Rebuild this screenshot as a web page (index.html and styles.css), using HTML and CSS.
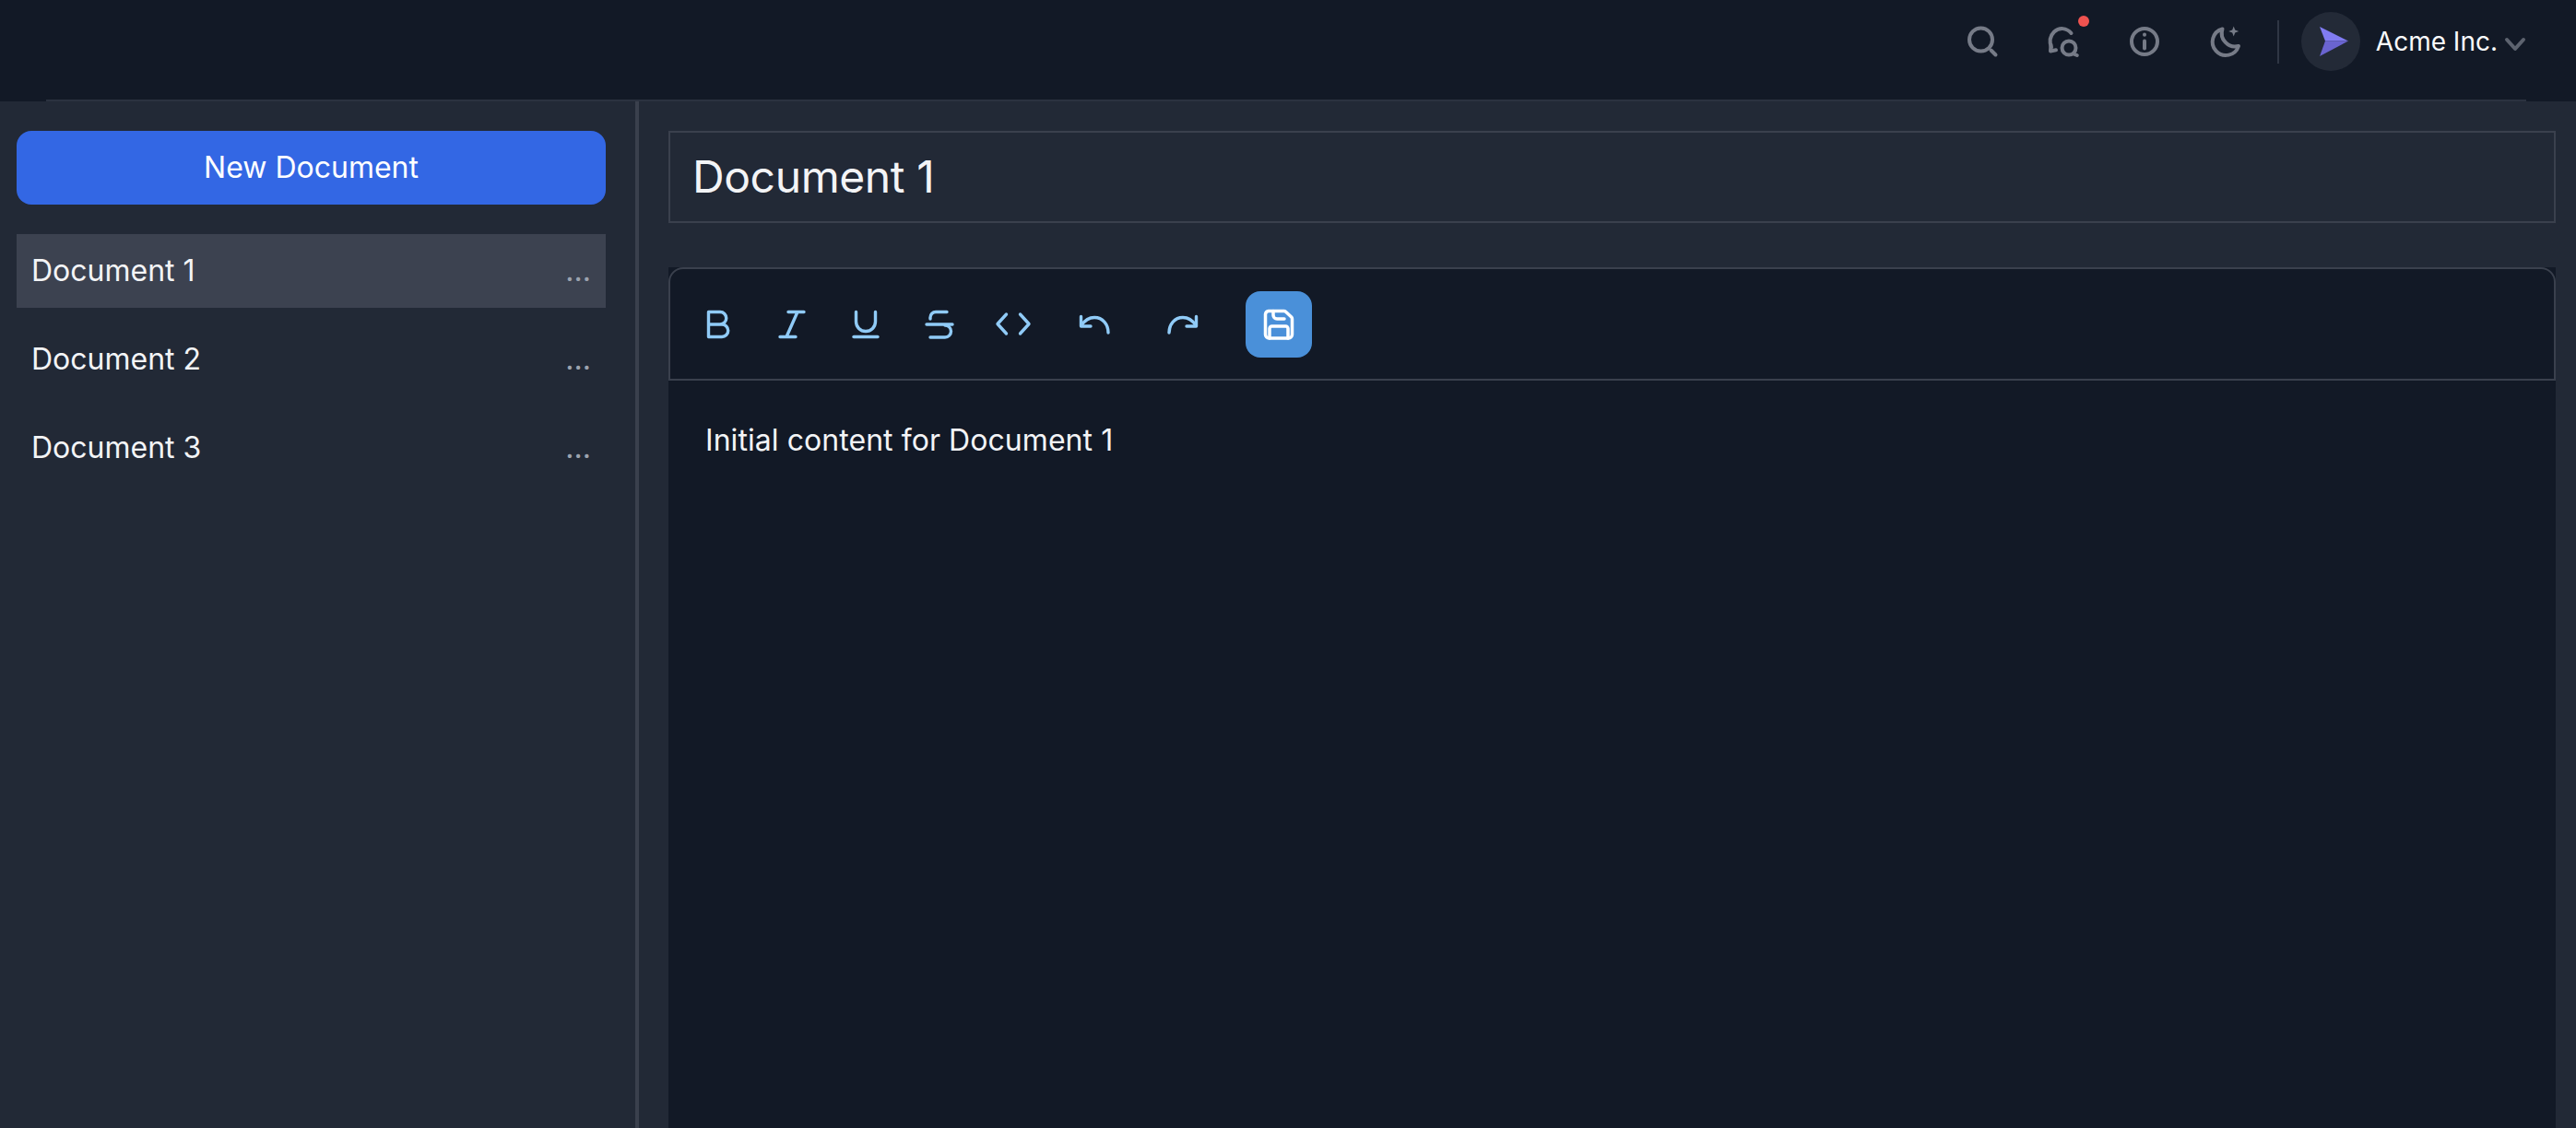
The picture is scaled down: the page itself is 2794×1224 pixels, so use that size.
FILE: index.html
```html
<!DOCTYPE html>
<html lang="en">
<head>
<meta charset="utf-8">
<title>Documents</title>
<link rel="stylesheet" href="styles.css">
</head>
<body>
<div class="app">
  <header class="header">
    <div class="header-inner">
      <div class="header-tools">
        <button class="hicon">
          <svg viewBox="0 0 40 40" class="hsvg"><circle cx="18.5" cy="18" r="12.5"/><path d="M29.5 29.5 34.5 34.5"/></svg>
        </button>
        <button class="hicon">
          <svg viewBox="0 0 40 40" class="hsvg"><path d="M7 26.5C4.5 20 5.5 14 10 9.5c5.5-5 13.500-4.500 18.500 1.500"/><path d="M6.500 23.500 6 30.500l6-1.200"/><circle cx="26" cy="27" r="7.500"/><path d="M31 33.500 34.800 35"/></svg>
          <span class="badge"></span>
        </button>
        <button class="hicon">
          <svg viewBox="0 0 40 40" class="hsvg"><circle cx="20" cy="20" r="14"/><path d="M20 19.500V27.500"/><path d="M20 12.500V12.700"/></svg>
        </button>
        <button class="hicon">
          <svg viewBox="0 0 40 40" class="hsvg"><path d="M16.500 6.500A14.500 14.500 0 1 0 34 25 14.500 14.500 0 0 1 16.500 6.500Z"/><path class="spark" d="M28.700 3.500 30.200 7.500 34.200 9 30.200 10.500 28.700 14.500 27.200 10.500 23.200 9 27.200 7.500Z"/></svg>
        </button>
      </div>
      <span class="hdivider"></span>
      <div class="account">
        <span class="avatar">
          <svg viewBox="0 0 64 64" class="plane"><path class="plane-top" d="M20 16 51 31.500H26Z"/><path class="plane-bottom" d="M20 48 51 31.500H26Z"/></svg>
        </span>
        <span class="account-name">Acme Inc.</span>
        <svg viewBox="0 0 24 16" class="chevron"><path d="M3 3 12 13 21 3"/></svg>
      </div>
    </div>
  </header>
  <div class="body">
    <aside class="sidebar">
      <button class="new-doc">New Document</button>
      <ul class="doc-list">
        <li class="doc-item active"><span>Document 1</span><span class="more">...</span></li>
        <li class="doc-item"><span>Document 2</span><span class="more">...</span></li>
        <li class="doc-item"><span>Document 3</span><span class="more">...</span></li>
      </ul>
    </aside>
    <main class="main">
      <div class="title-box">Document 1</div>
      <section class="editor">
        <div class="toolbar">
          <button class="tool"><svg viewBox="0 0 40 40" class="tsvg"><path d="M9.500 20V6.500H22a6.750 6.750 0 0 1 0 13.500H9.500V33.500H24a6.750 6.750 0 0 0 0-13.500H22"/></svg></button>
          <button class="tool"><svg viewBox="0 0 40 40" class="tsvg"><path d="M16 6.500H33M7 33.500H24M26 6.500 14 33.500"/></svg></button>
          <button class="tool"><svg viewBox="0 0 40 40" class="tsvg"><path d="M9.500 6.500V17a10.500 10.500 0 0 0 21 0V6.500"/><path d="M7 33.500H33"/></svg></button>
          <button class="tool"><svg viewBox="0 0 40 40" class="tsvg"><path d="M28 6.500H16a6 6 0 0 0-6 6V14"/><path d="M6 20H34"/><path d="M26 21a6.500 6.500 0 0 1 0 13H10"/></svg></button>
          <button class="tool"><svg viewBox="0 0 40 40" class="tsvg"><path d="M12.500 9 3 19.500 12.500 30M27.500 9 37 19.500 27.500 30"/></svg></button>
          <button class="tool wide"><svg viewBox="0 0 40 40" class="tsvg"><path d="M5.500 11.500V22H16"/><path d="M6 21C10 15 14 12.500 20 12.500 29 12.500 35 20 35 29"/></svg></button>
          <button class="tool wide"><svg viewBox="0 0 40 40" class="tsvg"><path d="M34.500 11.500V22H24"/><path d="M34 21C30 15 26 12.500 20 12.500 11 12.500 5 20 5 29"/></svg></button>
          <button class="save"><svg viewBox="0 0 40 40" class="ssvg"><path d="M9 5.500H25.500a3 3 0 0 1 2 .8L33.700 12a3 3 0 0 1 .8 2V31a4 4 0 0 1-4 4H9.500a4 4 0 0 1-4-4V9a4 4 0 0 1 3.500-3.500Z"/><path d="M14 5.500V10a4 4 0 0 0 4 4H26"/><path d="M10 35V24.500a2.500 2.500 0 0 1 2.500-2.500H27.500a2.500 2.500 0 0 1 2.500 2.500V35"/></svg></button>
        </div>
        <div class="content">Initial content for Document 1</div>
      </section>
    </main>
  </div>
</div>
</body>
</html>
```
FILE: styles.css
```css
* { box-sizing: border-box; }
html, body { margin: 0; height: 100%; overflow: hidden; }
body { background: #121926; color: #f3f4f6; font-family: Inter, "Liberation Sans", sans-serif; }
button { font: inherit; border: 0; background: none; color: inherit; padding: 0; margin: 0; }
ul { list-style: none; margin: 0; padding: 0; }

.app { display: flex; flex-direction: column; height: 1224px; }

.header { height: 110px; flex: none; background: #121926; padding: 0 54px 0 50px; }
.header-inner { height: 110px; display: flex; align-items: center; justify-content: flex-end; border-bottom: 2px solid #2b3240; padding-bottom: 18px; }
.header-tools { display: flex; gap: 48px; }
.hicon { position: relative; width: 40px; height: 40px; display: block; }
.hsvg { display: block; width: 40px; height: 40px; fill: none; stroke: #767b87; stroke-width: 4; stroke-linecap: round; stroke-linejoin: round; }
.hsvg .spark { fill: #767b87; stroke: none; }
.badge { position: absolute; left: 36px; top: -8px; width: 12px; height: 12px; border-radius: 50%; background: #ef5350; }
.hdivider { width: 2px; height: 47px; background: #2f3644; margin-left: 36px; }
.account { display: flex; align-items: center; margin-left: 24px; }
.avatar { width: 64px; height: 64px; border-radius: 50%; background: #232a37; display: block; }
.plane { display: block; width: 64px; height: 64px; }
.plane-top { fill: #817cf2; }
.plane-bottom { fill: #6a64d0; }
.account-name { font-size: 28px; line-height: 40px; color: #f9fafb; margin-left: 17px; }
.chevron { width: 24px; height: 16px; margin-left: 7px; margin-top: 6px; fill: none; stroke: #5d636f; stroke-width: 4; stroke-linecap: round; stroke-linejoin: round; }

.body { flex: 1; display: flex; min-height: 0; background: #222936; }
.sidebar { width: 693px; flex: none; padding: 32px 32px 0 18px; border-right: 4px solid #3a404d; }
.new-doc { display: block; width: 100%; height: 80px; border-radius: 16px; background: #3367e4; color: #fff; font-size: 32px; line-height: 48px; }
.doc-list { margin-top: 32px; display: flex; flex-direction: column; gap: 16px; }
.doc-item { height: 80px; display: flex; align-items: center; justify-content: space-between; padding: 0 16px; font-size: 32px; line-height: 48px; color: #f3f4f6; }
.doc-item.active { background: #3c4250; }
.more { color: #9ca3af; font-size: 32px; }

.main { flex: 1; min-width: 0; padding: 32px 22px 0 32px; display: flex; flex-direction: column; gap: 48px; }
.title-box { height: 100px; flex: none; border: 2px solid #3a404d; padding: 0 24px; font-size: 48px; line-height: 96px; letter-spacing: -0.4px; color: #f3f4f6; }
.editor { flex: 1; background: #121926; min-height: 0; }
.toolbar { display: flex; gap: 8px; padding: 24px 16px 23px; border: 2px solid #3a404d; border-radius: 16px 16px 0 0; height: 123px; align-items: center; }
.tool { width: 72px; height: 72px; display: flex; align-items: center; justify-content: center; }
.tool.wide { width: 88px; }
.tsvg { width: 40px; height: 40px; fill: none; stroke: #90cbf7; stroke-width: 3.400; stroke-linecap: round; stroke-linejoin: round; }
.save { width: 72px; height: 72px; margin-left: 16px; border-radius: 16px; background: #4a90d9; display: flex; align-items: center; justify-content: center; }
.ssvg { width: 40px; height: 40px; fill: none; stroke: #fff; stroke-width: 3.500; stroke-linecap: round; stroke-linejoin: round; }
.content { padding: 41px 40px; font-size: 32px; line-height: 48px; letter-spacing: 0.06px; color: #f3f4f6; }
```
